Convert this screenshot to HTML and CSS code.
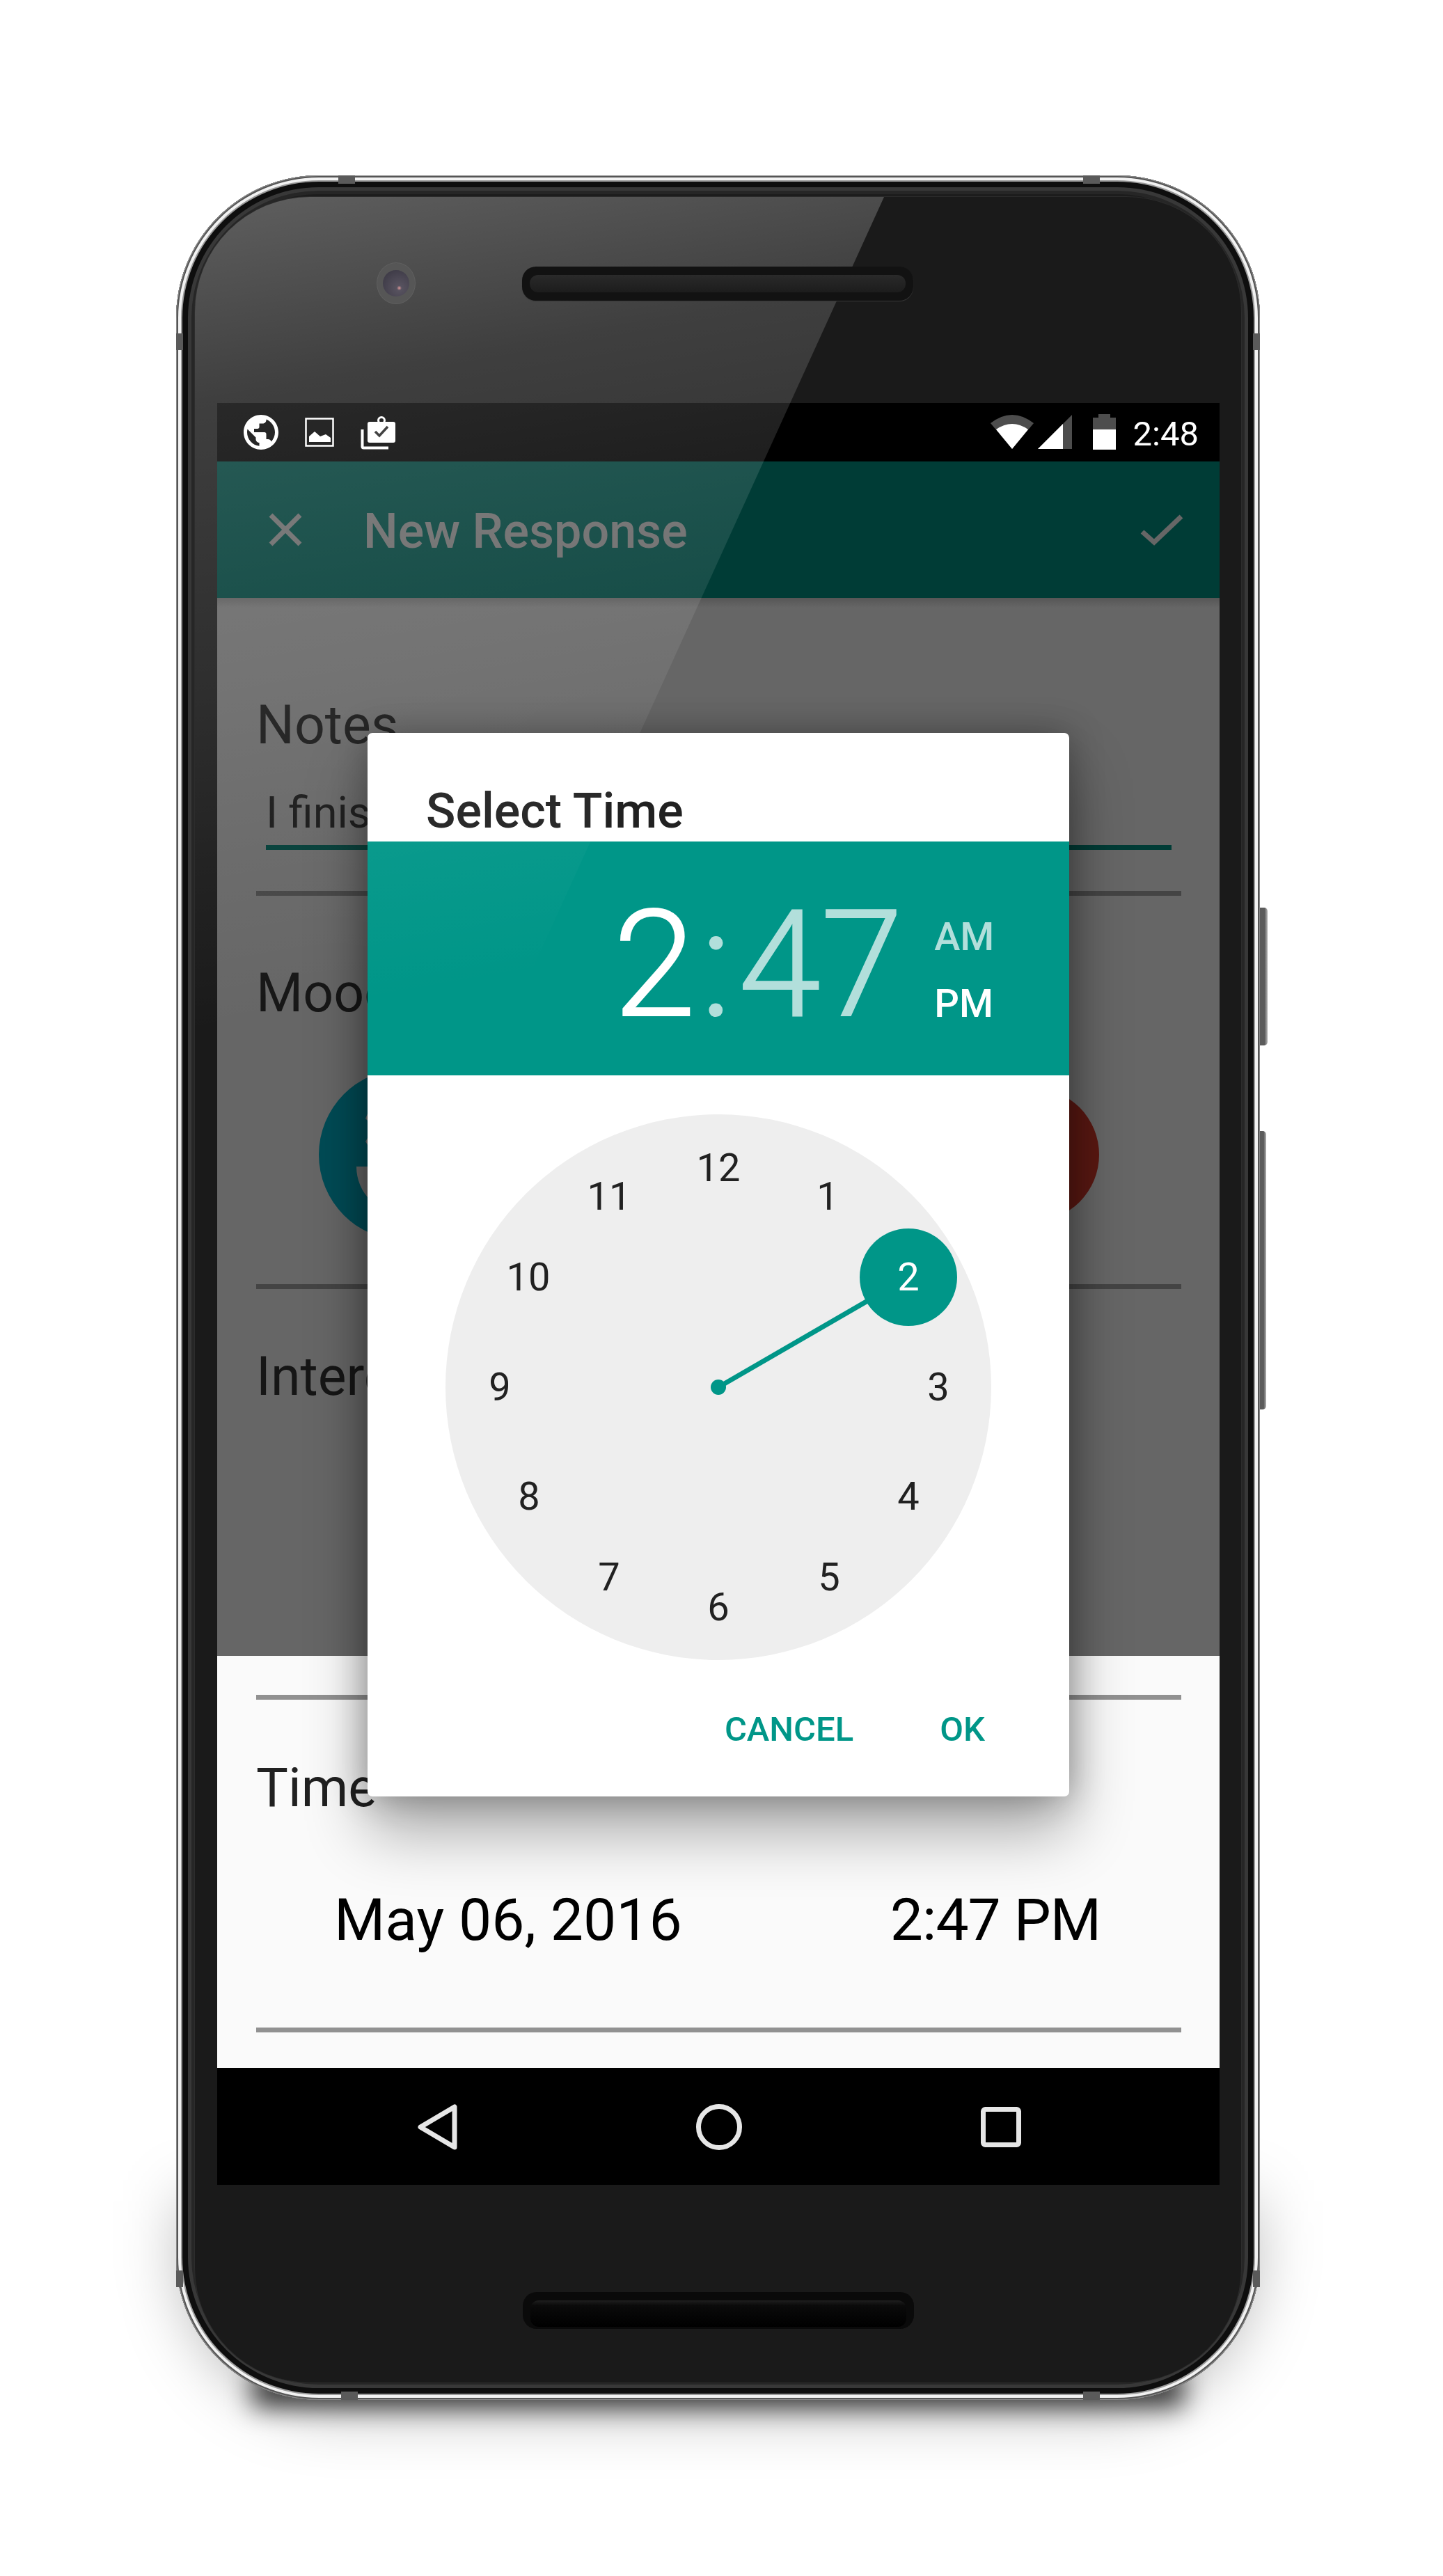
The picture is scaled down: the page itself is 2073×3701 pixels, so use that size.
FILE: index.html
```html
<!DOCTYPE html>
<html lang="en">
<head>
    <meta charset="UTF-8">
    <meta name="viewport" content="width=device-width, initial-scale=1.0">
    <title>New Response</title>
    <link rel="stylesheet" href="styles.css">
</head>
<body>

    <div class="phone">
        <span class="band band-top-l"></span>
        <span class="band band-top-r"></span>
        <span class="band band-left-t"></span>
        <span class="band band-right-t"></span>
        <span class="band band-left-b"></span>
        <span class="band band-right-b"></span>
        <span class="band band-bot-l"></span>
        <span class="band band-bot-r"></span>
        <span class="side-btn power"></span>
        <span class="side-btn volume"></span>

        <div class="glass">
            <div class="bezel-top">
                <div class="camera"><span class="lens"></span></div>
                <div class="speaker"><span class="grille"></span></div>
            </div>

            <div class="screen">
                <div class="status-bar">
                    <div class="status-left">
                        <svg class="ic-globe" viewBox="2 2 20 20"><path d="M12 2C6.48 2 2 6.48 2 12s4.48 10 10 10 10-4.48 10-10S17.52 2 12 2zm-1 17.93c-3.95-.49-7-3.85-7-7.93 0-.62.08-1.21.21-1.79L9 15v1c0 1.1.9 2 2 2v1.93zm6.9-2.54c-.26-.81-1-1.39-1.9-1.39h-1v-3c0-.55-.45-1-1-1H8v-2h2c.55 0 1-.45 1-1V7h2c1.1 0 2-.9 2-2v-.41c2.93 1.19 5 4.06 5 7.41 0 2.08-.8 3.97-2.1 5.39z" fill="#fff"/></svg>
                        <svg class="ic-photo" viewBox="0 0 42 42"><rect x="1.5" y="1.5" width="39" height="39" fill="none" stroke="#fff" stroke-width="2.5"/><path d="M6 35V27L14 20L22 27L30 24L37 29V35Z" fill="#fff"/></svg>
                        <svg class="ic-bag" viewBox="0 0 50 48"><path d="M2.5 19V43.5a2 2 0 0 0 2 2H40" fill="none" stroke="#fff" stroke-width="4"/><circle cx="30" cy="6" r="4.5" fill="none" stroke="#fff" stroke-width="3"/><rect x="10" y="8" width="40" height="30" rx="3" fill="#fff"/><path d="M21 22L27 28L39 15" fill="none" stroke="#222" stroke-width="3.5"/></svg>
                    </div>
                    <div class="status-right">
                        <svg class="ic-wifi" viewBox="0 0 62 49"><path d="M31 49L0 12Q31 -12 62 12Z" fill="#4d4d4d"/><path d="M31 49L8 21Q31 5 54 21Z" fill="#fff"/></svg>
                        <svg class="ic-signal" viewBox="0 0 49 49"><path d="M0 49L49 0V49Z" fill="#4d4d4d"/><path d="M0 49L36 13V49Z" fill="#fff"/></svg>
                        <svg class="ic-battery" viewBox="0 0 33 51"><path d="M8 0H25V5H33V22H0V5H8Z" fill="#4d4d4d"/><rect y="22" width="33" height="29" fill="#fff"/></svg>
                        <span class="clock-text">2:48</span>
                    </div>
                </div>

                <div class="app-bar">
                    <svg class="ic-close" viewBox="0 0 48 48"><path d="M3 3L45 45M45 3L3 45" stroke="#666" stroke-width="7"/></svg>
                    <h1 class="app-title">New Response</h1>
                    <svg class="ic-check" viewBox="0 0 62 46"><path d="M3 26L20 41L59 4" fill="none" stroke="#666" stroke-width="7"/></svg>
                </div>

                <div class="form-dim">
                    <div class="label label-notes">Notes</div>
                    <div class="note-input">I finis</div>
                    <div class="input-line"></div>
                    <div class="rule rule-notes"></div>
                    <div class="label label-mood">Mood</div>
                    <div class="moods">
                        <svg class="mood mood-good" viewBox="0 0 246 246">
                            <circle cx="123" cy="123" r="123" fill="#004b55"/>
                            <path d="M54 140H192A69 69 0 0 1 54 140Z" fill="#666"/>
                            <path d="M70 64L67 71L70 74ZM70 99L67 104L70 109Z" fill="#666"/>
                        </svg>
                        <svg class="mood mood-bad" viewBox="0 0 192 192">
                            <circle cx="96" cy="96" r="96" fill="#5a1812"/>
                            <path d="M53 68L59 66L60 73L53 77Z" fill="#777"/>
                        </svg>
                    </div>
                    <div class="rule rule-mood"></div>
                    <div class="label label-inter">Interest</div>
                </div>

                <div class="form-lit">
                    <div class="rule rule-lit"></div>
                    <div class="label label-time">Time</div>
                    <div class="when">
                        <span>May 06, 2016</span>
                        <span class="when-time">2:47 PM</span>
                    </div>
                    <div class="rule rule-end"></div>
                </div>

                <div class="nav-bar">
                    <svg class="ic-back" viewBox="0 0 57 66"><path d="M53 4V62L4 33Z" fill="none" stroke="#e6e6e6" stroke-width="7" stroke-linejoin="round"/></svg>
                    <svg class="ic-home" viewBox="0 0 66 66"><circle cx="33" cy="33" r="29.5" fill="none" stroke="#e6e6e6" stroke-width="7"/></svg>
                    <svg class="ic-recent" viewBox="0 0 58 58"><rect x="3.5" y="3.5" width="51" height="51" rx="3" fill="none" stroke="#e6e6e6" stroke-width="7"/></svg>
                </div>

                <div class="dialog">
                    <h2 class="dialog-title">Select Time</h2>
                    <div class="time-head">
                        <div class="big-time">
                            <span class="hour">2</span><span class="colon">:</span><span class="mins">47</span>
                        </div>
                        <div class="ampm">
                            <span class="am">AM</span>
                            <span class="pm">PM</span>
                        </div>
                    </div>
                    <div class="clock">
                        <svg class="hand" viewBox="0 0 784 784">
                            <line x1="392" y1="392" x2="665" y2="234" stroke="#009688" stroke-width="7"/>
                            <circle cx="392" cy="392" r="11" fill="#009688"/>
                            <circle cx="665" cy="234" r="70" fill="#009688"/>
                        </svg>
                        <span class="num n12">12</span>
                        <span class="num n1">1</span>
                        <span class="num n2">2</span>
                        <span class="num n3">3</span>
                        <span class="num n4">4</span>
                        <span class="num n5">5</span>
                        <span class="num n6">6</span>
                        <span class="num n7">7</span>
                        <span class="num n8">8</span>
                        <span class="num n9">9</span>
                        <span class="num n10">10</span>
                        <span class="num n11">11</span>
                    </div>
                    <div class="dialog-actions">
                        <span>CANCEL</span>
                        <span>OK</span>
                    </div>
                </div>
            </div>

            <div class="bezel-bottom">
                <div class="speaker speaker-low"><span class="grille"></span></div>
            </div>

            <div class="gloss"></div>
        </div>
    </div>

</body>
</html>
```

FILE: styles.css
```css
*{
    box-sizing: border-box;
}

html, body{
    margin: 0;
    height: 3701px;
    overflow: hidden;
}

body{
    background: #fff;
    font-family: Roboto, "Liberation Sans", sans-serif;
    padding: 252px 0 0 253px;
}

/* phone body */
.phone{
    position: relative;
    width: 1557px;
    height: 3196px;
    padding: 31px 27px 25px;
    border-radius: 205px;
    background: #1c1c1c;
    box-shadow: inset 0 0 0 1px #8a8a8a, inset 0 0 0 3px #555, inset 0 0 0 7px #f2f2f2, inset 0 0 0 9px #9a9a9a, inset 0 0 0 17px #0e0e0e, inset 0 0 0 22px #383838, inset 0 0 0 27px #262626;
}

.phone::before{
    content: "";
    position: absolute;
    z-index: -1;
    left: 10px;
    right: 10px;
    bottom: -14px;
    height: 300px;
    border-radius: 0 0 220px 220px;
    background: rgba(0, 0, 0, .3);
    filter: blur(46px);
}

.phone::after{
    content: "";
    position: absolute;
    z-index: -1;
    left: 110px;
    right: 110px;
    bottom: -10px;
    height: 50px;
    background: rgba(0, 0, 0, .75);
    filter: blur(18px);
}

.band{
    position: absolute;
    background: #5a5a5a;
}

.band-top-l, .band-top-r, .band-bot-l, .band-bot-r{
    width: 24px;
    height: 12px;
}

.band-left-t, .band-right-t, .band-left-b, .band-right-b{
    width: 10px;
    height: 24px;
}

.band-top-l{ left: 233px; top: 0; }
.band-top-r{ left: 1303px; top: 0; }
.band-bot-l{ left: 237px; bottom: 0; }
.band-bot-r{ left: 1303px; bottom: 0; }
.band-left-t{ left: 0; top: 227px; }
.band-right-t{ right: 0; top: 227px; }
.band-left-b{ left: 0; top: 3010px; }
.band-right-b{ right: 0; top: 3010px; }

.side-btn{
    position: absolute;
    left: 100%;
    border-radius: 0 5px 5px 0;
    background: linear-gradient(90deg, #5c5c5c 60%, #b5b5b5);
}

.power{
    top: 1052px;
    width: 11px;
    height: 198px;
}

.volume{
    top: 1373px;
    width: 9px;
    height: 400px;
}

.glass{
    position: relative;
    height: 3140px;
    overflow: hidden;
    padding: 0 31px 0 32px;
    border-radius: 165px;
    background: #1a1a1a;
    box-shadow: 0 0 0 1px #2c2c2c;
}

.bezel-top{
    display: flex;
    align-items: center;
    height: 296px;
    padding: 96px 0 144px 229px;
}

.camera{
    position: relative;
    z-index: 1;
    display: flex;
    align-items: center;
    justify-content: center;
    width: 56px;
    height: 60px;
    margin-right: 153px;
    border-radius: 50%;
    background: #565656;
    border: 1px solid #5f5f5f;
}

.lens{
    width: 38px;
    height: 38px;
    border-radius: 50%;
    background: radial-gradient(circle at 62% 68%, #d99 0, #57525f 10%, #3e3b47 80%);
}

.speaker{
    position: relative;
    z-index: 1;
    display: flex;
    align-items: center;
    width: 562px;
    height: 49px;
    padding: 0 11px;
    border-radius: 20px;
    background: #121212;
    box-shadow: 0 1px 1px #3a3a3a;
}

.grille{
    display: block;
    width: 100%;
    height: 25px;
    border-radius: 12px;
    background: linear-gradient(180deg, #2a2a2a, #1c1c1c);
}

.bezel-bottom{
    display: flex;
    padding: 154px 0 0 439px;
}

.speaker-low{
    height: 53px;
    background: #0a0a0a;
    box-shadow: none;
}

.speaker-low .grille{
    height: 38px;
    margin-top: 8px;
    background: linear-gradient(180deg, #1e1e1e 0, #0a0a0a 20%, #000);
}

/* screen */
.screen{
    position: relative;
    width: 1440px;
    height: 2560px;
}

.status-bar{
    display: flex;
    justify-content: space-between;
    height: 84px;
    background: #000;
    padding: 16px 30px 0 38px;
}

.status-left, .status-right{
    display: flex;
    align-items: flex-start;
}

.ic-globe{
    width: 50px;
    height: 50px;
    margin: 1px 38px 0 0;
}

.ic-photo{
    width: 42px;
    height: 42px;
    margin: 5px 38px 0 0;
}

.ic-bag{
    width: 50px;
    height: 48px;
    margin-top: 3px;
}

.ic-wifi{
    width: 62px;
    height: 49px;
    margin: 1px 6px 0 0;
}

.ic-signal{
    width: 49px;
    height: 49px;
    margin: 1px 30px 0 0;
}

.ic-battery{
    width: 33px;
    height: 51px;
    margin-right: 25px;
}

.clock-text{
    color: #fff;
    font-size: 49px;
    line-height: 58px;
}

.app-bar{
    display: flex;
    align-items: center;
    height: 196px;
    padding: 0 52px 0 74px;
    background: #003c36;
}

.ic-close{
    width: 48px;
    height: 48px;
    margin-right: 88px;
}

.app-title{
    flex: 1;
    margin: 0;
    padding-top: 4px;
    color: #666;
    font-size: 70px;
    font-weight: 500;
    line-height: 82px;
}

.ic-check{
    width: 62px;
    height: 46px;
}

.form-dim{
    height: 1520px;
    padding-top: 138px;
    background: linear-gradient(180deg, #565656 0, #666 14px);
    color: #161616;
    overflow: hidden;
}

.form-lit{
    height: 592px;
    padding-top: 56px;
    background: #fafafa;
    color: #212121;
}

.label{
    padding-left: 56px;
    font-size: 77px;
    line-height: 90px;
    white-space: nowrap;
}

.note-input{
    margin-top: 44px;
    padding-left: 70px;
    font-size: 63px;
    line-height: 74px;
    white-space: nowrap;
}

.input-line{
    height: 7px;
    margin: 9px 69px 0 70px;
    background: #003c36;
}

.rule{
    height: 7px;
    margin: 0 55px 0 56px;
    background: #444;
}

.rule-notes{ margin-top: 59px; }
.rule-mood{ margin-top: 63px; }
.rule-lit, .rule-end{ background: #919191; }
.rule-end{ margin-top: 105px; }

.label-mood{ margin-top: 95px; }
.label-inter{ margin-top: 81px; }
.label-time{ margin-top: 82px; }

.moods{
    display: flex;
    align-items: center;
    justify-content: space-between;
    margin-top: 64px;
    padding: 0 173px 0 146px;
}

.mood{
    display: block;
}

.mood-good{
    width: 246px;
    height: 246px;
}

.mood-bad{
    width: 192px;
    height: 192px;
}

.when{
    display: flex;
    justify-content: space-between;
    margin-top: 96px;
    padding: 0 171px 0 168px;
    color: #000;
    font-size: 84px;
    line-height: 98px;
}

.when-time{
    letter-spacing: -1px;
}

.nav-bar{
    display: flex;
    align-items: center;
    justify-content: space-between;
    height: 168px;
    padding: 2px 285px 0 288px;
    background: #000;
}

.ic-back{
    width: 57px;
    height: 66px;
}

.ic-home{
    width: 66px;
    height: 66px;
}

.ic-recent{
    width: 58px;
    height: 58px;
}

/* time picker */
.dialog{
    position: absolute;
    left: 216px;
    top: 474px;
    width: 1008px;
    height: 1528px;
    border-radius: 7px;
    background: #fff;
    box-shadow: 0 0 50px rgba(0, 0, 0, .3), 0 50px 90px rgba(0, 0, 0, .33);
}

.dialog-title{
    height: 156px;
    margin: 0;
    padding: 71px 0 0 84px;
    color: #212121;
    font-size: 70px;
    font-weight: 500;
    line-height: 82px;
}

.time-head{
    display: flex;
    height: 336px;
    padding-left: 353px;
    background: #009688;
    color: #b2dfdb;
}

.big-time{
    display: flex;
    padding-top: 18px;
    font-size: 213px;
    font-weight: 300;
    line-height: 318px;
    -webkit-text-stroke: 2px currentColor;
}

.hour{
    color: #fff;
}

.colon{
    margin-left: 7px;
}

.mins{
    margin-left: 10px;
}

.ampm{
    display: flex;
    flex-direction: column;
    margin: 89px 0 0 45px;
    font-size: 56px;
    font-weight: 500;
    line-height: 96px;
}

.pm{
    color: #fff;
}

.clock{
    position: relative;
    width: 784px;
    height: 784px;
    margin: 56px auto 0;
    border-radius: 50%;
    background: #eee;
}

.hand{
    position: absolute;
    inset: 0;
}

.num{
    position: absolute;
    color: #212121;
    font-size: 56px;
    line-height: 66px;
    transform: translate(-50%, -50%);
}

.n12{ left: 392px; top: 77px; }
.n1{ left: 549px; top: 118px; }
.n2{ left: 665px; top: 234px; color: #fff; }
.n3{ left: 708px; top: 392px; }
.n4{ left: 665px; top: 549px; }
.n5{ left: 551px; top: 665px; }
.n6{ left: 392px; top: 708px; }
.n7{ left: 235px; top: 665px; }
.n8{ left: 120px; top: 549px; }
.n9{ left: 78px; top: 392px; }
.n10{ left: 119px; top: 234px; }
.n11{ left: 235px; top: 118px; }

.dialog-actions{
    display: flex;
    justify-content: flex-end;
    gap: 124px;
    padding: 71px 121px 0 0;
    color: #009688;
    font-size: 49px;
    font-weight: 500;
    line-height: 58px;
}

/* reflection on the glass, lies over everything */
.gloss{
    position: absolute;
    left: 0;
    top: 0;
    width: 1000px;
    height: 1240px;
    background: linear-gradient(170deg, rgba(255, 255, 255, .3) 0, rgba(255, 255, 255, .16) 21%, rgba(255, 255, 255, .11) 41%, rgba(255, 255, 255, .09) 50%, rgba(255, 255, 255, .04) 68%, rgba(255, 255, 255, 0) 85%);
    clip-path: polygon(0 0, 990px 0, 438px 1212px, 0 1212px);
}
```
